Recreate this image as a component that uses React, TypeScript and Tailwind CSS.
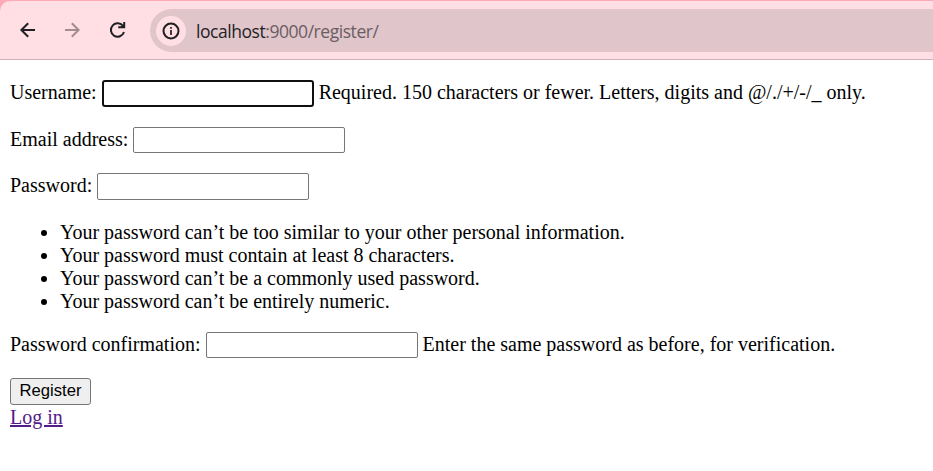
import type { ReactNode } from "react";

const rules = [
  "Your password can’t be too similar to your other personal information.",
  "Your password must contain at least 8 characters.",
  "Your password can’t be a commonly used password.",
  "Your password can’t be entirely numeric.",
];

function Field({ label, type, help, className, inputClass }: {
  label: string;
  type: string;
  help?: ReactNode;
  className: string;
  inputClass: string;
}) {
  return (
    <div className={`flex items-start whitespace-nowrap ${className}`}>
      <label className="flex items-start">
        <span className="pt-px">{label}</span>
        <input type={type} className={`block w-[212px] bg-white px-1 outline-none ${inputClass}`} />
      </label>
      {help && <span className="ml-[5px] pt-px">{help}</span>}
    </div>
  );
}

function Toolbar() {
  return (
    <header className="h-[60px] bg-[#ffa9b7]">
      <div className="h-px" />
      <div className="flex h-[59px] items-start rounded-tl-[10px] border-b border-[#cdb2bc] bg-[#ffdee4]">
        <nav className="flex pt-[18px] pl-[17px]">
          <button aria-label="Back" className="h-[22px] w-[22px]">
            <svg width="22" height="22" viewBox="0 0 22 22" fill="none" stroke="#1f1f24" strokeWidth="2">
              <path d="M18 11H5M11.2 4.2 4.4 11l6.8 6.8" />
            </svg>
          </button>
          <button aria-label="Forward" className="ml-[23px] h-[22px] w-[22px]">
            <svg width="22" height="22" viewBox="0 0 22 22" fill="none" stroke="#a18c92" strokeWidth="2">
              <path d="M3 11h13M9.8 4.2l6.8 6.8-6.8 6.8" />
            </svg>
          </button>
          <button aria-label="Reload" className="ml-[23px] h-[22px] w-[22px]">
            <svg width="22" height="22" viewBox="0 0 22 22" fill="none" stroke="#1f1f24" strokeWidth="2">
              <path d="M16.2 7.3A6.7 6.7 0 1 0 17 13" />
              <path d="M17.2 3v5.3h-6" />
              <path d="M17.2 5v3.3h-3.5Z" fill="#1f1f24" stroke="none" />
            </svg>
          </button>
        </nav>
        <div className="mt-2 ml-[21px] flex h-[43px] flex-1 items-center rounded-l-full bg-[#e0c5ca] pl-1.5">
          <div className="flex h-[30px] w-[30px] items-center justify-center rounded-full bg-[#ffdee4]">
            <svg width="18" height="18" viewBox="0 0 18 18" fill="none" stroke="#1f1f24">
              <circle cx="9" cy="9" r="7.5" strokeWidth="2" />
              <path d="M9 8v5M9 5v1.7" strokeWidth="1.7" />
            </svg>
          </div>
          <span className="ml-[10px] pt-px text-[17.5px] tracking-[-0.45px] text-[#6a5d63]" style={{ fontFamily: '"Open Sans", sans-serif' }}>
            <span className="text-[#1f1f24]">localhost</span>:9000/register/
          </span>
        </div>
      </div>
    </header>
  );
}

export default function App() {
  const plain = "rounded-[2px] border border-[#767676]";
  return (
    <div className="h-[471px] overflow-hidden bg-white text-black">
      <Toolbar />
      <main
        className="pt-5 pl-[10px] text-[20px] leading-[23px]"
        style={{ fontFamily: '"Liberation Serif", "Times New Roman", serif' }}
      >
        <Field
          label="Username:"
          type="text"
          className="h-[47px]"
          inputClass="ml-[5px] h-[27px] rounded-[3px] border-2 border-[#101010]"
          help="Required. 150 characters or fewer. Letters, digits and @/./+/-/_ only."
        />
        <Field label="Email address:" type="email" className="h-[46px]" inputClass={`ml-[5px] h-[26px] ${plain}`} />
        <Field label="Password:" type="password" className="h-[47px]" inputClass={`ml-[5px] h-[27px] ${plain}`} />
        <ul className="list-disc pt-px pl-[50px]">
          {rules.map((r) => (
            <li key={r}>{r}</li>
          ))}
        </ul>
        <Field
          label="Password confirmation:"
          type="password"
          className="mt-[19px] h-[46px]"
          inputClass={`ml-[5px] h-[26px] ${plain}`}
          help="Enter the same password as before, for verification."
        />
        <button
          className="block h-[27px] w-[81px] rounded-[3px] border border-[#767676] bg-[#efefef] pb-0.5 text-[16.67px] leading-[23px]"
          style={{ fontFamily: '"Liberation Sans", Arial, sans-serif' }}
        >
          Register
        </button>
        <a href="#" className="mt-px block w-fit text-[#551a8b] underline">
          Log in
        </a>
      </main>
    </div>
  );
}
